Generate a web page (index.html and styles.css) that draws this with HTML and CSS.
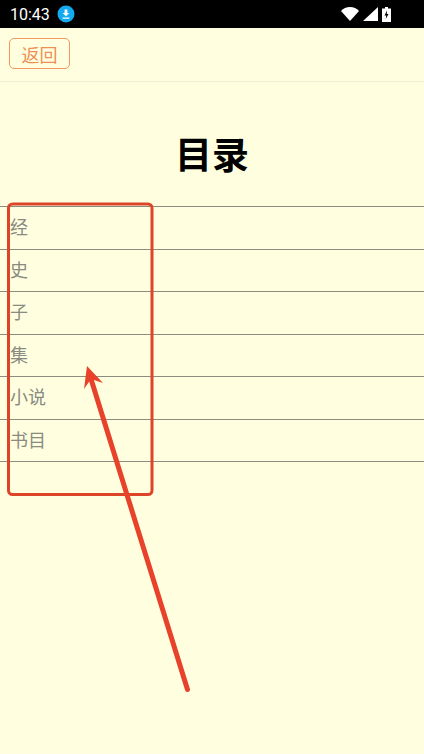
FILE: index.html
```html
<!DOCTYPE html>
<html lang="zh">

<head>
    <meta name="viewport" content="width=device-width, initial-scale=1">
    <meta charset="utf-8">
    <title>目录</title>
    <link rel="stylesheet" href="styles.css">
</head>

<body>
    <!-- Status bar -->
    <div class="status-bar">
        <div class="status-left">
            <span class="clock">10:43</span>
            <svg class="download-icon" width="18" height="18" viewBox="0 0 18 18">
                <circle cx="9" cy="9" r="8.500" fill="#12aaf0"/>
                <path d="M7.600 4.500h2.800v3.600h2L9 11.300 5.600 8.100h2zM5.600 12.400h6.800v1.300H5.600z" fill="#fff"/>
            </svg>
        </div>
        <div class="status-right">
            <svg width="18" height="14" viewBox="0 0 18 14">
                <path d="M0 3.900C2.300 1.500 5.400 0 9 0s6.700 1.500 9 3.900L9 14z" fill="#fff"/>
            </svg>
            <svg width="15" height="14" viewBox="0 0 15 14">
                <path d="M15 0v14H0z" fill="#fff"/>
            </svg>
            <svg width="9" height="15" viewBox="0 0 9 15">
                <path d="M3 0h3v1.500h3V15H0V1.500h3z" fill="#fff"/>
                <path d="M5 3.500 2.500 8.500h1.700L3.800 12l2.700-5H4.800z" fill="#000"/>
            </svg>
        </div>
    </div>

    <div class="top-bar">
        <a class="back-btn">返回</a>
    </div>

    <h1 class="page-title">目录</h1>

    <ul class="catalog">
        <li>经</li>
        <li>史</li>
        <li>子</li>
        <li>集</li>
        <li>小说</li>
        <li>书目</li>
    </ul>

    <!-- Red annotation drawn over the list -->
    <svg class="annotation" width="424" height="754" viewBox="0 0 424 754">
        <rect x="8.500" y="204" width="143.500" height="290.500" rx="4" fill="none" stroke="#dd4528" stroke-width="3"/>
        <path d="M187.500 689.500 91 379" fill="none" stroke="#e8432a" stroke-width="5" stroke-linecap="round"/>
        <path d="M87 366 103 383 91 379 84 389z" fill="#e8432a"/>
    </svg>
</body>

</html>
```

FILE: styles.css
```css
* {
    margin: 0;
    padding: 0;
    box-sizing: border-box;
}

html,
body {
    height: 100%;
    overflow: hidden;
}

body {
    position: relative;
    background: #ffffe0;
    font-family: "Liberation Sans", "Noto Sans CJK SC", sans-serif;
}

/* Status bar */
.status-bar {
    display: flex;
    justify-content: space-between;
    align-items: center;
    height: 28px;
    padding: 0 33px 0 10px;
    background: #000;
    color: #fff;
}

.status-left {
    display: flex;
    align-items: center;
    gap: 7px;
}

.clock {
    font-family: Roboto, sans-serif;
    font-size: 16px;
}

.status-right {
    display: flex;
    align-items: center;
    gap: 4px;
}

/* Back button */
.top-bar {
    height: 54px;
    padding-top: 10px;
    border-bottom: 1px solid #eeeed8;
}

.back-btn {
    display: flex;
    justify-content: center;
    align-items: center;
    width: 61px;
    height: 31px;
    margin-left: 9px;
    border: 1.500px solid #ee9a62;
    border-radius: 5px;
    color: #ee9055;
    font-size: 18px;
}

.page-title {
    height: 124px;
    padding-top: 48px;
    font-size: 37px;
    line-height: 53px;
    text-align: center;
    color: #000;
}

/* Catalog list */
.catalog {
    list-style: none;
    border-top: 1px solid #8c8c80;
}

.catalog li {
    height: 42.500px;
    padding-left: 10px;
    border-bottom: 1px solid #8c8c80;
    font-size: 18px;
    line-height: 43px;
    color: #8a8a80;
}

.annotation {
    position: absolute;
    top: 0;
    left: 0;
}
```
